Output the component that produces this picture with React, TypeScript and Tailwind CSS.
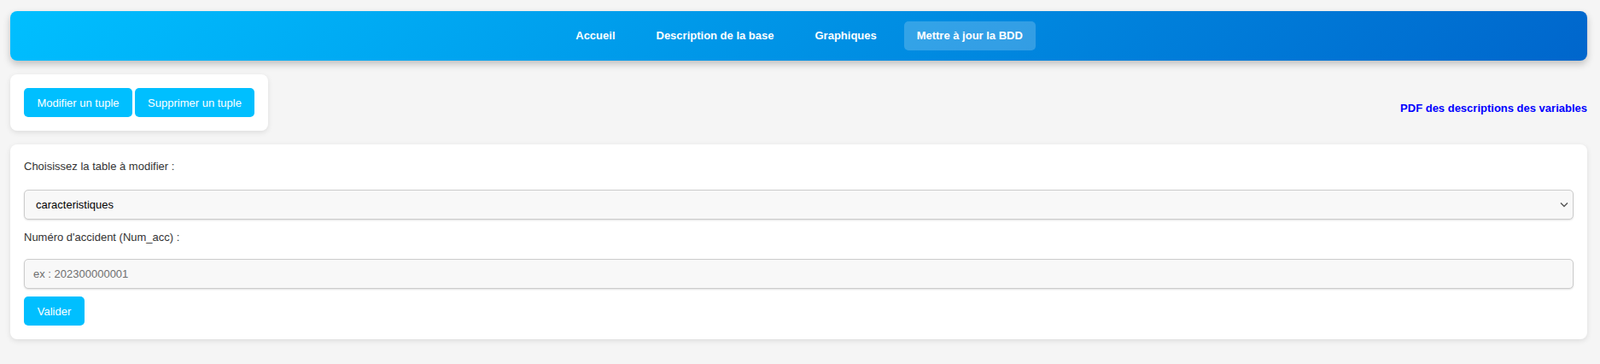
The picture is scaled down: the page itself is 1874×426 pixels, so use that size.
import React from "react";

const navLinks = ["Accueil", "Description de la base", "Graphiques"];

const Navbar: React.FC = () => {
  return (
    <nav className="h-[58px] rounded-lg bg-[linear-gradient(135deg,#00bfff,#0066cc)] shadow-[0_4px_8px_rgba(0,0,0,0.22)] flex items-center justify-center gap-4">
      {navLinks.map((l) => (
        <a key={l} href="#" className="px-4 h-[34px] flex items-center text-[13px] font-bold text-white">
          {l}
        </a>
      ))}
      <a href="#" className="w-[154px] h-[34px] flex items-center justify-center rounded-[5px] bg-white/20 text-[13px] font-bold text-white">
        Mettre à jour la BDD
      </a>
    </nav>
  );
};

const ActionButton: React.FC<{ label: string; className?: string }> = ({ label, className = "" }) => (
  <button className={`h-[34px] rounded-[5px] bg-[#00bfff] text-white text-[13px] leading-[15px] ${className}`}>
    {label}
  </button>
);

export default function App() {
  return (
    <div className="h-[426px] overflow-hidden bg-[#f5f5f5] pt-[13px] pl-3 pr-[15px] font-['Liberation_Sans',Arial,sans-serif]">
      <Navbar />

      <div className="mt-4 flex items-start justify-between">
        <div className="bg-white rounded-lg p-4 shadow-[0_2px_6px_rgba(0,0,0,0.1)] flex gap-[3px]">
          <ActionButton label="Modifier un tuple" className="w-[127px]" />
          <ActionButton label="Supprimer un tuple" className="w-[140px]" />
        </div>
        <a href="#" className="mt-[32px] text-[13px] leading-[15px] font-bold text-[#0000ff]">
          PDF des descriptions des variables
        </a>
      </div>

      <div className="mt-4 bg-white rounded-lg p-4 shadow-[0_2px_6px_rgba(0,0,0,0.1)] text-[13px] leading-[15px]">
        <label className="block mt-[2px] text-[#333]">Choisissez la table à modifier :</label>
        <div className="relative mt-[20px]">
          <select className="w-full h-[35px] appearance-none rounded-[5px] border border-[#ccc] bg-[#f8f8f8] pl-[13px] text-black text-[13px] shadow-[0_1px_2px_rgba(0,0,0,0.12)] outline-none">
            <option>caracteristiques</option>
          </select>
          <svg
            className="absolute right-[6px] top-[14px] pointer-events-none"
            width="10"
            height="7"
            viewBox="0 0 10 7"
            fill="none"
            stroke="#555"
            strokeWidth="1.4"
          >
            <path d="M1 1.5 5 5.5 9 1.5" />
          </svg>
        </div>
        <label className="block mt-[13px] text-[#333]">Numéro d'accident (Num_acc) :</label>
        <input
          type="text"
          placeholder="ex : 202300000001"
          className="mt-[18px] block w-full h-[35px] rounded-[5px] border border-[#ccc] bg-[#f8f8f8] pl-[10px] text-[13px] placeholder:text-[#6f6f6f] shadow-[0_1px_2px_rgba(0,0,0,0.12)] outline-none"
        />
        <ActionButton label="Valider" className="mt-[9px] w-[71px] block" />
      </div>
    </div>
  );
}
